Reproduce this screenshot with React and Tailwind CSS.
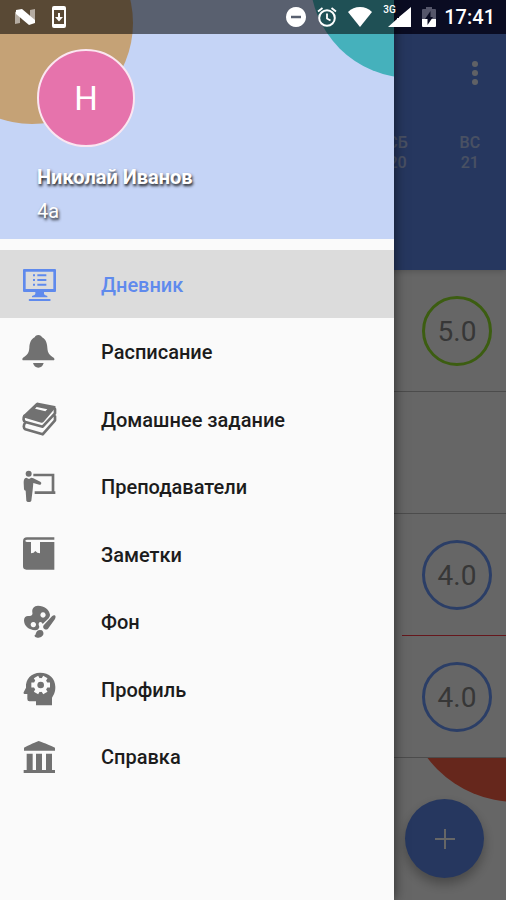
import React, { useState } from 'react';
import clsx from 'clsx';

const WEEKEND = [
  { name: 'СБ', date: 20, column: 'col-start-6' },
  { name: 'ВС', date: 21, column: 'col-start-7' },
];

const LESSONS = [
  { id: 1, grade: '5.0', ring: 'border-[#96e82c]' },
  { id: 2, grade: null },
  { id: 3, grade: '4.0', ring: 'border-[#6d9bff]', marked: true },
  { id: 4, grade: '4.0', ring: 'border-[#6d9bff]' },
];

const MENU = [
  { id: 'diary', label: 'Дневник', Icon: DiaryIcon },
  { id: 'schedule', label: 'Расписание', Icon: BellIcon },
  { id: 'homework', label: 'Домашнее задание', Icon: BooksIcon },
  { id: 'teachers', label: 'Преподаватели', Icon: TeacherIcon },
  { id: 'notes', label: 'Заметки', Icon: NotebookIcon },
  { id: 'background', label: 'Фон', Icon: PaletteIcon },
  { id: 'profile', label: 'Профиль', Icon: ProfileIcon },
  { id: 'help', label: 'Справка', Icon: BankIcon },
];

function MenuIcon({ children }) {
  return (
    <svg viewBox="0 0 102 102" className="w-[34px] h-[34px] shrink-0 overflow-visible" fill="currentColor" aria-hidden="true">
      {children}
    </svg>
  );
}

function DiaryIcon() {
  return (
    <MenuIcon>
      <path fillRule="evenodd" d="M6 3H99Q102 3 102 6V69Q102 72 99 72H66V78Q66 81 76 84V88H30V84Q40 81 40 78V72H6Q3 72 3 69V6Q3 3 6 3ZM11 11V63H94V11Z" />
      <path d="M33 19h6v6h-6zM46 19h27v6H46zM33 33h6v6h-6zM46 33h27v6H46zM33 47h6v6h-6zM46 47h27v6H46z" />
      <rect x="20" y="93" width="66" height="6" rx="3" />
    </MenuIcon>
  );
}

function BellIcon() {
  return (
    <MenuIcon>
      <path d="M49 0C43 0 39 3 38 7C27 12 23 24 22 38C21 54 16 60 3 68C-1 72 1 76 5 76H93C98 76 99 72 95 68C82 60 77 54 76 38C75 24 71 12 60 7C59 3 55 0 49 0Z" />
      <path d="M33 84H65Q61 98 49 98Q37 98 33 84Z" />
    </MenuIcon>
  );
}

function BooksIcon() {
  return (
    <MenuIcon>
      <path fillRule="evenodd" d="M5 36L42 1Q45 -2 49 -1L99 9Q103 11 100 15L65 56Q62 60 58 59L8 44Q3 41 5 36ZM39 17L44 12L76 19L70 25Z" />
      <path
        d="M7 39C3 46 4 54 10 57L62 71L99 31V18M9 60C4 66 4 76 10 79L62 94L99 52V40"
        fill="none"
        stroke="currentColor"
        strokeWidth="8"
        strokeLinejoin="round"
        strokeLinecap="round"
      />
    </MenuIcon>
  );
}

function TeacherIcon() {
  return (
    <MenuIcon>
      <circle cx="20" cy="11" r="9" />
      <path d="M13 23C6 24 5 30 5 38L6 58Q7 62 11 62L13 92C14 97 27 97 28 92L32 60L34 39L52 44C58 45 60 38 55 35L34 25L28 23L21 27Z" />
      <path d="M34 15H93V66M38 68H100" fill="none" stroke="currentColor" strokeWidth="8" />
    </MenuIcon>
  );
}

function NotebookIcon() {
  return (
    <MenuIcon>
      <path d="M3 10Q3 -2 15 -2H97V5H16Q10 5 10 8Q10 12 16 12H27V46Q36 46 40 39Q45 46 54 46V12H97V95H13Q3 95 3 85Z" />
    </MenuIcon>
  );
}

function PaletteIcon() {
  return (
    <MenuIcon>
      <path
        fillRule="evenodd"
        d="M6 46C6 36 13 32 20 33C29 34 33 29 31 22C29 11 36 2 48 2C67 2 81 13 84 29C85 35 78 43 68 51L62 57C60 49 51 49 50 56C49 60 52 63 52 66C51 72 46 76 40 76C20 75 6 63 6 46ZM63 22a8 8 0 1 0 0.1 0ZM34 51a8 8 0 1 0 0.1 0Z"
      />
      <path d="M98 31Q103 33 99 42L78 71Q73 76 67 72Q61 68 65 61L90 34Q95 29 98 31Z" />
      <path d="M60 76Q67 83 63 91Q57 100 46 98Q38 97 37 92Q41 90 42 84Q46 72 60 76Z" />
    </MenuIcon>
  );
}

function ProfileIcon() {
  return (
    <MenuIcon>
      <path d="M54 -1C82 -1 100 16 100 42C100 58 96 64 90 74V97H42V85H22Q16 85 16 78V63H7Q3 62 5 58L12 44C10 18 28 -1 54 -1Z" />
      <g className="text-[#fafafa]">
        <circle cx="56" cy="36" r="21" />
        <path d="M28 36H84M42 12L70 60M70 12L42 60" stroke="currentColor" strokeWidth="15" />
      </g>
      <circle cx="56" cy="36" r="10" />
    </MenuIcon>
  );
}

function BankIcon() {
  return (
    <MenuIcon>
      <path d="M50 3Q53 3 99 23V32H6V23Q47 3 50 3ZM14 41H32V90H42V41H60V90H72V41H90V90H99V99H5V90H14Z" />
    </MenuIcon>
  );
}

function StatusBar() {
  return (
    <div className="absolute inset-x-0 top-0 z-30 h-[34px] flex items-center justify-between pl-[15px] pr-[11px] text-white">
      <div className="flex items-center gap-[17px]">
        <svg viewBox="0 0 20 18" className="w-5 h-[18px]" aria-hidden="true">
          <path d="M0 4L5 2V15L0 16ZM20 1V14L15 16V2Z" fill="#b5aca2" />
          <path d="M1 2L7 1L20 12V15L14 17L1 6Z" fill="#fff" />
        </svg>
        <svg viewBox="0 0 14 22" className="w-3.5 h-[22px]" aria-hidden="true">
          <path
            fillRule="evenodd"
            fill="#fff"
            d="M2 0H12Q14 0 14 2V20Q14 22 12 22H2Q0 22 0 20V2Q0 0 2 0ZM2 4V18H12V4ZM6 7H8V11H11L7 15.500L3 11H6Z"
          />
        </svg>
      </div>
      <div className="flex items-center gap-2">
        <div className="flex items-center gap-[11px]">
          <svg viewBox="0 0 20 20" className="w-5 h-5" aria-hidden="true">
            <path fillRule="evenodd" fill="#fff" d="M10 0a10 10 0 1 0 .01 0ZM5 8.700H15V11.300H5Z" />
          </svg>
          <svg viewBox="0 0 20 20" className="w-5 h-5" fill="none" stroke="#fff" strokeWidth="2" aria-hidden="true">
            <circle cx="10" cy="11" r="7.800" />
            <path d="M10 6.500V11.500L13.500 13.500M1 4.500L5.500 1M19 4.500L14.500 1" strokeWidth="1.800" />
          </svg>
          <svg viewBox="0 0 24 20" className="w-6 h-5" aria-hidden="true">
            <path d="M12 20L0 5Q5 0 12 0T24 5Z" fill="#fff" />
          </svg>
          <div className="relative w-7 h-5">
            <span className="absolute left-0 -top-0.5 text-[10px] leading-none font-medium">3G</span>
            <svg viewBox="0 0 28 20" className="w-7 h-5" aria-hidden="true">
              <path d="M28 0V20H5L14 12V11H16L16 10Z" fill="#fff" />
            </svg>
          </div>
          <svg viewBox="0 0 14 20" className="w-3.5 h-5" aria-hidden="true">
            <path d="M4 0H10V2H13Q14 2 14 3V12H0V3Q0 2 1 2H4Z" fill="#55566a" />
            <path d="M0 12H14V19Q14 20 13 20H1Q0 20 0 19Z" fill="#fff" />
            <path d="M8.500 4V10H11L5.500 18V12H3Z" fill="#0a0c22" />
          </svg>
        </div>
        <span className="text-[20px] leading-none font-medium">17:41</span>
      </div>
    </div>
  );
}

function GradeRow({ lesson }) {
  return (
    <li
      className={clsx(
        'h-[122px] flex items-center justify-end pr-3.5 border-b',
        lesson.marked ? 'w-26 ml-auto border-[#ff3a48]' : 'border-[#bdbdbd]'
      )}
    >
      {lesson.grade && (
        <span
          className={clsx(
            'w-[70px] h-[70px] pt-0.5 rounded-full border-3 flex items-center justify-center text-[28px] text-[#8a8a8a]',
            lesson.ring
          )}
        >
          {lesson.grade}
        </span>
      )}
    </li>
  );
}

function DiaryPage() {
  return (
    <main className="min-h-screen flex flex-col bg-white">
      <header className="relative bg-[#5f8aed] shadow-md h-[270px] text-white">
        <div className="h-[34px] bg-[#191e55]" />
        <div className="h-[78px] flex items-center justify-end pr-[22px]">
          <button type="button" aria-label="Меню" className="w-[18px] flex flex-col items-center gap-[3px]">
            <span className="w-1.5 h-1.5 rounded-full bg-white/90" />
            <span className="w-1.5 h-1.5 rounded-full bg-white/90" />
            <span className="w-1.5 h-1.5 rounded-full bg-white/90" />
          </button>
        </div>
        <div className="grid grid-cols-7 pt-[21px] text-center leading-5 font-medium text-white/55">
          {WEEKEND.map((day) => (
            <div key={day.date} className={day.column}>
              <div>{day.name}</div>
              <div>{day.date}</div>
            </div>
          ))}
        </div>
      </header>
      <ul>
        {LESSONS.map((lesson) => (
          <GradeRow key={lesson.id} lesson={lesson} />
        ))}
      </ul>
      <div className="relative flex-1 min-h-[142px] overflow-hidden">
        <div className="absolute -top-[178px] -right-[121px] w-[222px] h-[222px] rounded-full bg-[#ff6148]" />
        <button
          type="button"
          aria-label="Добавить"
          className="absolute right-[22px] bottom-[22px] w-[79px] h-[79px] rounded-full bg-[#5f8aed] shadow-[0_6px_12px_rgba(0,0,0,0.3)] flex items-center justify-center"
        >
          <svg viewBox="0 0 20 20" className="w-5 h-5" aria-hidden="true">
            <path d="M10 0V20M0 10H20" stroke="#fff" strokeWidth="2" />
          </svg>
        </button>
      </div>
    </main>
  );
}

function Drawer({ active, onSelect }) {
  return (
    <aside className="absolute inset-y-0 left-0 right-28 z-20 bg-[#fafafa] shadow-[0_0_12px_rgba(0,0,0,0.6)]">
      <div className="relative h-[239px] overflow-hidden bg-[#c5d4f6] pl-[37px] pt-[49px]">
        <div className="absolute -left-[69px] -top-[78px] w-[202px] h-[202px] rounded-full bg-[#c5a276]" />
        <div className="absolute -right-[118px] -top-[124px] w-[202px] h-[202px] rounded-full bg-[#45b1bc]" />
        <div className="absolute inset-x-0 top-0 h-[34px] bg-black/55" />
        <div className="relative w-[98px] h-[98px] pt-0.5 rounded-full border-2 border-[#fbe6f1] bg-[#e673ac] flex items-center justify-center text-[33px] text-white">
          Н
        </div>
        <div className="mt-[18px] text-[20px] leading-6 font-bold text-white [text-shadow:1px_2px_3px_rgba(0,0,0,0.9)]">
          Николай Иванов
        </div>
        <div className="mt-2.5 text-[20px] leading-6 text-white [text-shadow:1px_2px_3px_rgba(0,0,0,0.9)]">4а</div>
      </div>
      <nav className="mt-[11px] h-[540px] grid grid-rows-8">
        {MENU.map(({ id, label, Icon }) => (
          <button
            key={id}
            type="button"
            onClick={() => onSelect(id)}
            className={clsx(
              'flex items-center gap-[45px] pl-[22px] pt-0.5 text-left',
              active === id ? 'bg-[#dcdcdc] text-[#5f8aed]' : 'text-[#717171]'
            )}
          >
            <Icon />
            <span className={clsx('text-[20px] font-medium', active === id ? 'text-[#5f8aed]' : 'text-[#1c1c1c]')}>
              {label}
            </span>
          </button>
        ))}
      </nav>
    </aside>
  );
}

export default function App() {
  const [active, setActive] = useState('diary');

  return (
    <div className="relative min-h-screen overflow-hidden font-[Roboto,sans-serif]">
      <DiaryPage />
      <div className="absolute inset-0 z-10 bg-black/60" />
      <Drawer active={active} onSelect={setActive} />
      <StatusBar />
    </div>
  );
}
